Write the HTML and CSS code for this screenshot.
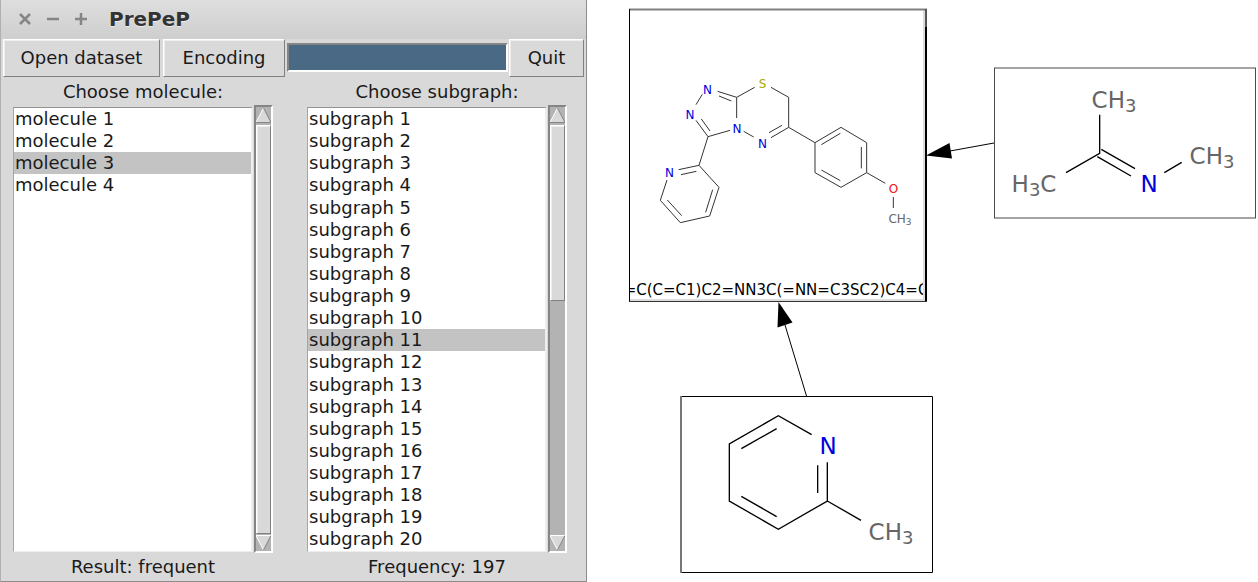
FILE: index.html
```html
<!DOCTYPE html>
<html lang="en">
<head>
<meta charset="utf-8">
<title>PrePeP</title>
<link rel="stylesheet" href="styles.css">
</head>
<body>
<main class="page">
  <section class="window">
    <header class="titlebar">
      <button class="win-btn" aria-label="Close"><svg viewBox="0 0 14 14"><path d="M2 2l10 10M12 2L2 12"/></svg></button>
      <button class="win-btn" aria-label="Minimize"><svg viewBox="0 0 14 14"><path d="M1 7h12"/></svg></button>
      <button class="win-btn" aria-label="Maximize"><svg viewBox="0 0 14 14"><path d="M1 7h12M7 1v12"/></svg></button>
      <h1 class="title">PrePeP</h1>
    </header>
    <div class="toolbar">
      <button class="btn btn-open">Open dataset</button>
      <button class="btn btn-encoding">Encoding</button>
      <div class="progress" role="progressbar" aria-label="Progress" aria-valuenow="100"></div>
      <button class="btn btn-quit">Quit</button>
    </div>
    <div class="columns">
      <div class="column">
        <label class="caption" for="molecules">Choose molecule:</label>
        <div class="list">
          <select class="listbox" id="molecules" size="20">
            <option>molecule 1</option><option>molecule 2</option><option selected>molecule 3</option><option>molecule 4</option>
          </select>
          <div class="scrollbar">
            <button class="arrow" aria-label="Scroll molecules up"><svg viewBox="0 0 15 16"><path class="face" d="M7.500 1L0 16H15z"/><path class="lit" d="M7.500 1L0 15.500"/><path class="dark" d="M7.500 1L15 15.500H0"/></svg></button>
            <div class="track"><div class="thumb thumb-full"></div></div>
            <button class="arrow" aria-label="Scroll molecules down"><svg viewBox="0 0 15 16"><path class="face" d="M0 0H15L7.500 15z"/><path class="lit" d="M15 .5H0L7.500 15"/><path class="dark" d="M15 .5L7.500 15"/></svg></button>
          </div>
        </div>
        <p class="status">Result: frequent</p>
      </div>
      <div class="column">
        <label class="caption" for="subgraphs">Choose subgraph:</label>
        <div class="list">
          <select class="listbox" id="subgraphs" size="20">
            <option>subgraph 1</option><option>subgraph 2</option><option>subgraph 3</option><option>subgraph 4</option>
            <option>subgraph 5</option><option>subgraph 6</option><option>subgraph 7</option><option>subgraph 8</option>
            <option>subgraph 9</option><option>subgraph 10</option><option selected>subgraph 11</option><option>subgraph 12</option>
            <option>subgraph 13</option><option>subgraph 14</option><option>subgraph 15</option><option>subgraph 16</option>
            <option>subgraph 17</option><option>subgraph 18</option><option>subgraph 19</option><option>subgraph 20</option>
          </select>
          <div class="scrollbar">
            <button class="arrow" aria-label="Scroll subgraphs up"><svg viewBox="0 0 15 16"><path class="face" d="M7.500 1L0 16H15z"/><path class="lit" d="M7.500 1L0 15.500"/><path class="dark" d="M7.500 1L15 15.500H0"/></svg></button>
            <div class="track"><div class="thumb thumb-part"></div></div>
            <button class="arrow" aria-label="Scroll subgraphs down"><svg viewBox="0 0 15 16"><path class="face" d="M0 0H15L7.500 15z"/><path class="lit" d="M15 .5H0L7.500 15"/><path class="dark" d="M15 .5L7.500 15"/></svg></button>
          </div>
        </div>
        <p class="status">Frequency: 197</p>
      </div>
    </div>
  </section>

  <svg class="diagram" viewBox="587 0 671 582" role="img" aria-label="Molecule with two matching subgraphs">
    <defs>
      <clipPath id="smiles-clip"><rect x="629.500" y="270" width="293.500" height="29"/></clipPath>
    </defs>

    <!-- molecule -->
    <path class="box-shade" d="M924 10V300M630 300H925"/>
    <path class="box-top" d="M629 9.500H927"/>
    <path class="box-side" d="M629.500 9V301"/>
    <path class="box-right" d="M926 27V301"/>
    <path class="box-right-top" d="M926 9V27"/>
    <path class="box-bottom" d="M629 301.500H927"/>
    <g class="bonds-small" transform="translate(620 60) scale(.33333)">
      <path d="M247 103L228 134M293 94L350 112M297 108L334 123M350 112L404 82M453 82L506 112V202M350 112V174M330 211L264 230L228 181M270 213L244 177M264 230L237 316M371 214L401 231M506 202L453 233M486 196L447 218"/>
      <path d="M506 202L585 248V338L663 382L740 338V248L663 202L585 248M604 254L661 220M724 261V325M661 362L604 330M740 338L796 370M820 411V444"/>
      <path d="M237 316L176 329M229 334L183 344M237 316L297 382L269 468L181 488L121 421L141 360M278 389L257 457M185 467L142 420"/>
    </g>
    <g class="atoms-small">
      <text class="sulfur" x="762.500" y="88">S</text>
      <text class="nitrogen" x="707.500" y="94">N</text>
      <text class="nitrogen" x="690" y="119">N</text>
      <text class="nitrogen" x="737" y="133">N</text>
      <text class="nitrogen" x="762.500" y="148">N</text>
      <text class="nitrogen" x="669.500" y="177">N</text>
      <text class="oxygen" x="893.500" y="193">O</text>
      <text class="carbon" x="900" y="223">CH<tspan class="sub-small" dy="2">3</tspan></text>
    </g>
    <g clip-path="url(#smiles-clip)"><text class="smiles" x="776" y="295">=C(C=C1)C2=NN3C(=NN=C3SC2)C4=C</text></g>

    <!-- imine subgraph -->
    <rect class="box-gray" x="994.500" y="68" width="261" height="150"/>
    <g class="bonds" transform="translate(920 60) scale(.33333)">
      <path d="M539 164V280L438 338M544 268L645 326M532 290L633 348M733 338L785 307"/>
    </g>
    <g class="atoms">
      <text class="carbon" x="1114" y="108">CH<tspan class="sub" dy="4">3</tspan></text>
      <text class="carbon" x="1034" y="192">H<tspan class="sub" dy="4">3</tspan><tspan dy="-4">C</tspan></text>
      <text class="carbon" x="1212" y="164">CH<tspan class="sub" dy="4">3</tspan></text>
      <text class="nitrogen" x="1149" y="192">N</text>
    </g>
    <path class="link" d="M994 143L950 151"/>
    <path class="head" d="M926 155.500L949.500 143L952 158.500z"/>

    <!-- pyridine subgraph -->
    <path class="box-side" d="M681 396.500H932.500V572.500H681"/>
    <path class="box-left" d="M681 396V573"/>
    <g class="bonds" transform="translate(670 390) scale(.33333)">
      <path d="M425 134L325 77L178 162V333L325 418L472 333V217M214 176L320 116M214 319L320 380M443 226V309M472 333L573 391"/>
    </g>
    <g class="atoms">
      <text class="nitrogen" x="828" y="454">N</text>
      <text class="carbon" x="891" y="540">CH<tspan class="sub" dy="4">3</tspan></text>
    </g>
    <path class="link" d="M806.500 396L785 325"/>
    <path class="head" d="M778.500 302L792.500 322.500L777.500 327.500z"/>
  </svg>
</main>
</body>
</html>
```

FILE: styles.css
```css
* { box-sizing: border-box; }

body {
  margin: 0;
  background: #fff;
  font-family: "DejaVu Sans", sans-serif;
  font-size: 18px;
  line-height: 22px;
  color: #1a1a1a;
}

.page {
  display: grid;
  grid-template-columns: 587fr 671fr;
  align-items: start;
}

button {
  font: inherit;
  color: inherit;
  padding: 0;
  margin: 0;
}

.window {
  display: flex;
  flex-direction: column;
  min-height: 100vh;
  background: #d9d9d9;
  border: 1px solid #8c8c8c;
  border-top: 0;
  border-left-color: #b0b0b0;
}

.titlebar {
  display: flex;
  align-items: center;
  gap: 14px;
  height: 39px;
  padding: 0 17px 2px;
  background: linear-gradient(#dedede, #cecece);
}

.win-btn {
  width: 14px;
  height: 14px;
  border: 0;
  background: none;
}

.win-btn svg { display: block; }

.win-btn path {
  fill: none;
  stroke: #858585;
  stroke-width: 2.500;
}

.title {
  margin: 0 0 0 7px;
  font-size: 20px;
  line-height: 24px;
  color: #333;
  text-shadow: 0 1px 0 #eee;
}

.toolbar {
  display: flex;
  align-items: flex-start;
  padding: 0 2px 0 2px;
}

.btn {
  height: 38px;
  padding: 0;
  background: #d9d9d9;
  border: 1px solid;
  border-color: #fff #808080 #808080 #fff;
  box-shadow: inset 1px 1px 0 #eee;
  white-space: nowrap;
}

.btn-open { flex: 0 0 157px; }
.btn-encoding { flex: 0 0 122px; margin-left: 3px; }
.btn-quit { flex: 0 0 75px; margin-left: 1px; }

.progress {
  flex: 1;
  height: 29px;
  margin: 4px 0 0 2px;
  background: #4a6984;
  border: 2px solid;
  border-color: #858585 #fff #fff #858585;
}

.columns {
  flex: 1;
  display: grid;
  grid-template-columns: 1fr 1fr;
  gap: 34px;
  padding: 4px 19px 0 12px;
}

.column {
  display: flex;
  flex-direction: column;
}

.caption, .status {
  margin: 0;
  text-align: center;
}

.caption { line-height: 21px; padding-bottom: 3px; }
.status { padding: 3px 0; }

.list {
  flex: 1;
  display: flex;
}

.listbox {
  flex: 1;
  height: auto;
  margin: 2px 1px 1px 0;
  padding: 0;
  overflow: hidden;
  font: inherit;
  color: inherit;
  background: #fff;
  border: 2px solid;
  border-color: #929292 #eee #eee #a5a5a5;
  border-width: 1px 2px 1px 1px;
  border-radius: 0;
  outline: 0;
}

.listbox option {
  min-height: 1.23em;
  padding: 0 1px;
  color: #1a1a1a;
}

.listbox option:checked {
  color: #1a1a1a;
  background: #c3c3c3 linear-gradient(#c3c3c3, #c3c3c3);
}

.scrollbar {
  display: flex;
  flex-direction: column;
  width: 19px;
  background: #b3b3b3;
  border: 2px solid;
  border-color: #858585 #fff #fff #858585;
}

.arrow {
  height: 16px;
  border: 0;
  background: none;
}

.arrow svg { display: block; width: 100%; height: 16px; }
.face { fill: #d9d9d9; }
.lit, .dark { fill: none; stroke-width: 1; }
.lit { stroke: #fff; }
.dark { stroke: #858585; }

.track { flex: 1; padding: 2px 0 1px; }

.thumb {
  background: #d9d9d9;
  border: 1px solid;
  border-color: #fff #808080 #808080 #fff;
  box-shadow: inset 1px 1px 0 #eee;
}

.thumb-full { height: 100%; }
.thumb-part { height: 43%; }

.diagram {
  display: block;
  width: 100%;
  height: auto;
}

.bonds path, .bonds-small path, .link {
  fill: none;
  stroke: #000;
}

.bonds path { stroke-width: 4; }
.bonds-small path { stroke: #333; stroke-width: 3; }
.link { stroke-width: 1; }
.head { fill: #000; }

.box-side { fill: none; stroke: #000; stroke-width: 1; }
.box-right { stroke: #000; stroke-width: 2; }
.box-right-top { stroke: #555; stroke-width: 2; }
.box-top { stroke: #808080; stroke-width: 2; }
.box-bottom { stroke: #333; stroke-width: 1; }
.box-left { stroke: #777; stroke-width: 2; }
.box-shade { fill: none; stroke: #ddd; stroke-width: 2; }
.box-gray { fill: none; stroke: #4a4a4a; stroke-width: 1; }

.atoms text, .atoms-small text, .smiles { text-anchor: middle; }
.atoms text { font-size: 23px; }
.atoms-small text { font-size: 12px; }
.atoms .sub { font-size: 18px; }
.atoms-small .sub-small { font-size: 9px; }
.smiles { font-size: 15px; fill: #000; }

.atoms .nitrogen, .atoms-small .nitrogen { fill: #0000dc; }
.carbon { fill: #666; }
.oxygen { fill: #e11; }
.sulfur { fill: #aa0; }
```
